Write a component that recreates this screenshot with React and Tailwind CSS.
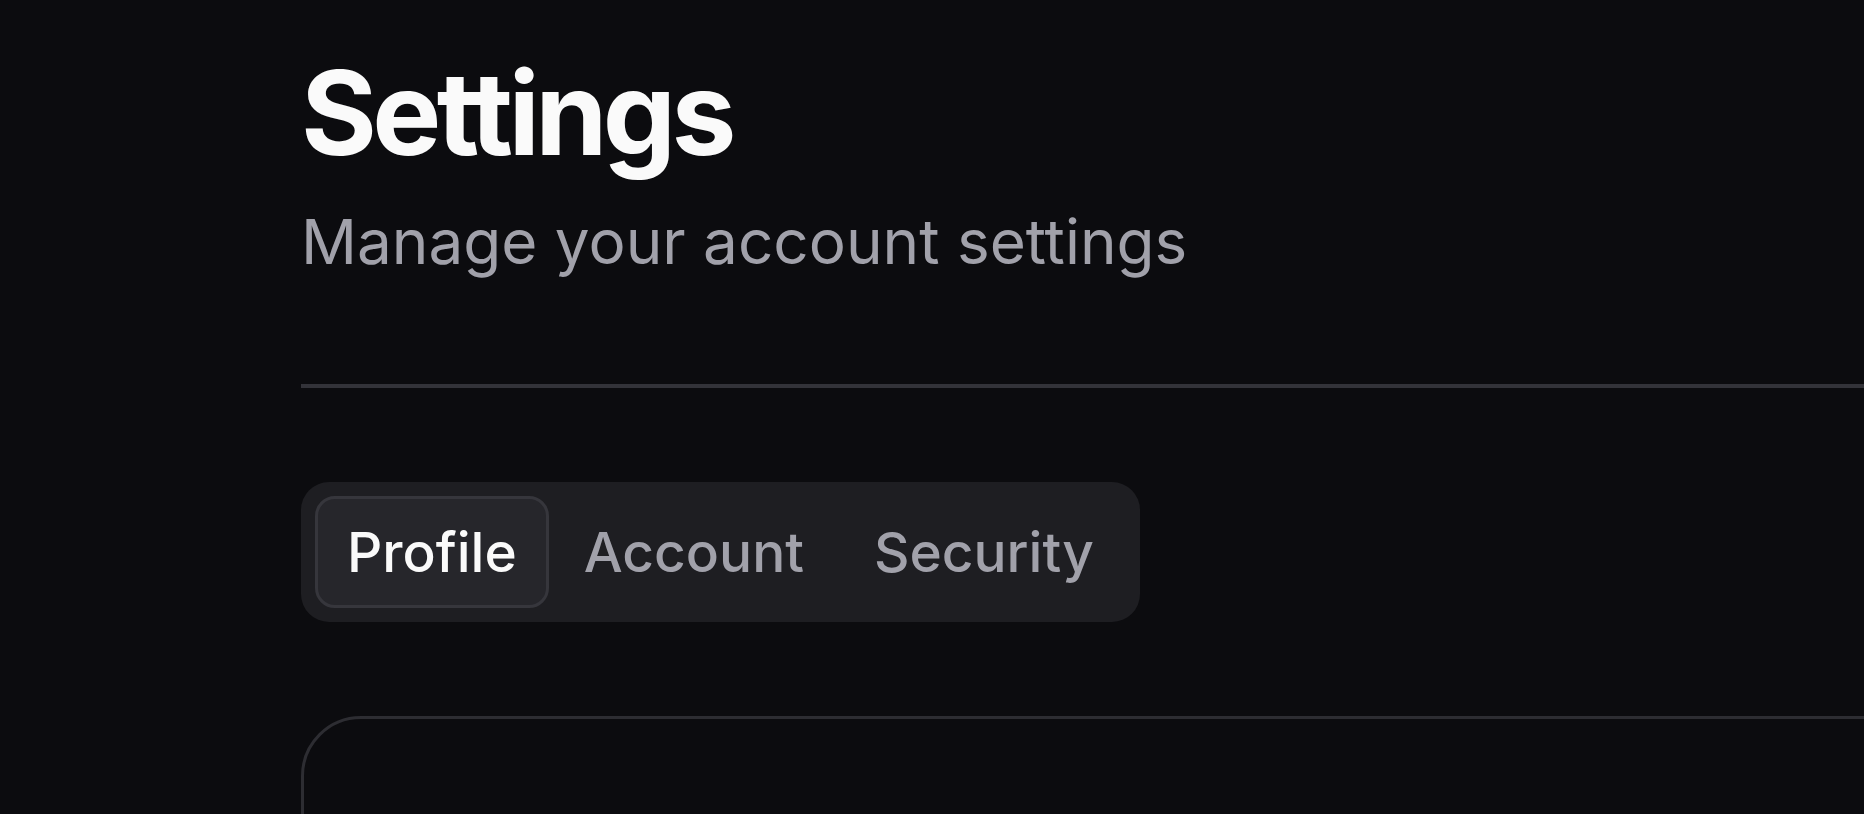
export default function App() {
  const tabs = ['Profile', 'Account', 'Security'];
  const active = 'Profile';

  return (
    <div
      className="h-[814px] w-full overflow-hidden bg-[#0c0c0f] pl-[301px] pt-[44px]"
      style={{ fontFamily: 'Inter, "Noto Sans", sans-serif' }}
    >
      <h1 className="text-[116px] font-bold leading-[1.2] tracking-[-0.04em] text-[#fafafa]">Settings</h1>
      <p className="mt-[19px] text-[62px] leading-[1.3] text-[#a1a1aa]">Manage your account settings</p>

      <div className="mt-[101px] h-[4px] w-full bg-[#333339]" />

      <div className="mt-[94px] inline-flex items-center rounded-[28px] bg-[#1e1e22] py-[14px] pl-[14px] pr-[11px]">
        {tabs.map((tab) => (
          <button
            key={tab}
            className={
              tab === active
                ? 'rounded-[20px] border-[3px] border-[#36363c] bg-[#26262b] px-[29px] py-[20px] text-[55px] font-medium leading-[1.2] text-[#fafafa]'
                : 'rounded-[20px] border-[3px] border-transparent px-[32px] py-[20px] text-[55px] font-medium leading-[1.2] text-[#a1a1aa]'
            }
          >
            {tab}
          </button>
        ))}
      </div>

      <div className="mt-[94px] h-[400px] w-[1700px] rounded-[60px] border-[3px] border-[#2d2d32] bg-[#0c0c0f]" />
    </div>
  );
}
